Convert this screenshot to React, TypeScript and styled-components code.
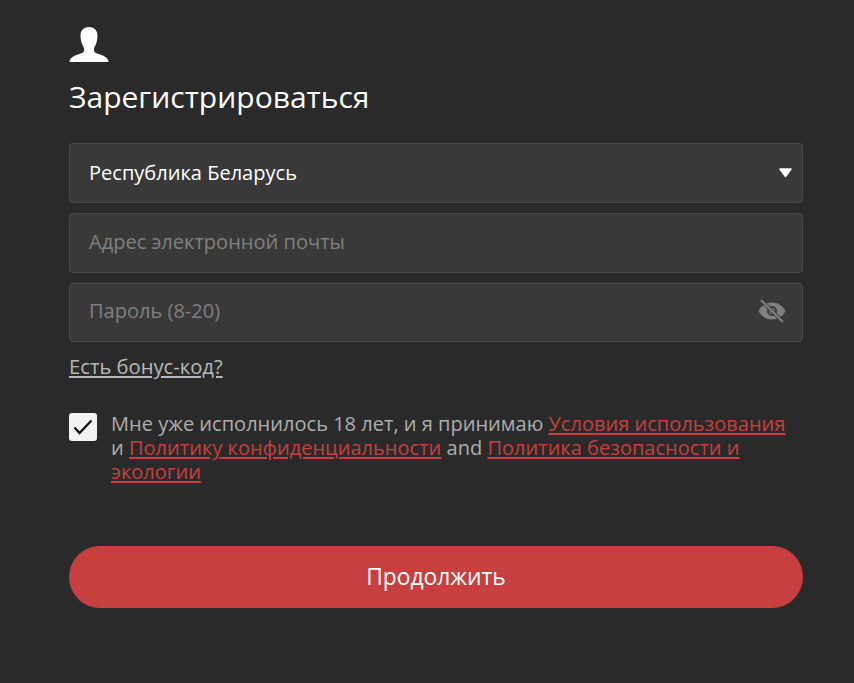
import React from "react"
import styled, { createGlobalStyle } from "styled-components"

const GlobalStyle = createGlobalStyle`
  html, body {
    margin: 0;
    padding: 0;
    background: #2a2a2a;
    font-family: "Open Sans", "Noto Sans", sans-serif;
  }
  * {
    box-sizing: border-box;
  }
`

const Page = styled.div`
  width: 854px;
  height: 683px;
  padding: 25px 51px 0 69px;
  background: #2a2a2a;
  overflow: hidden;
`

const UserIcon = styled.svg`
  display: block;
  width: 40px;
  height: 38px;
`

const Title = styled.h1`
  margin: 14px 0 26px;
  font-size: 30px;
  line-height: 40px;
  font-weight: 400;
  color: #fff;
`

const Fields = styled.div`
  display: flex;
  flex-direction: column;
  gap: 10px;
`

const Field = styled.div<{ $short?: boolean }>`
  display: flex;
  align-items: center;
  justify-content: space-between;
  height: ${(p) => (p.$short ? 59.5 : 60)}px;
  padding: 0 17px 0 19px;
  background: #393939;
  border: 1px solid #4a4a4a;
  border-radius: 4px;
`

const FieldText = styled.span<{ $filled?: boolean }>`
  margin-top: ${(p) => (p.$filled ? -2 : -3)}px;
  font-size: 20.05px;
  font-weight: ${(p) => (p.$filled ? 500 : 400)};
  color: ${(p) => (p.$filled ? "#fff" : "#808080")};
`

const Caret = styled.svg`
  display: block;
  width: 13px;
  height: 10px;
  margin-right: -7px;
`

const EyeIcon = styled.svg`
  display: block;
  width: 28px;
  height: 24px;
  margin-top: -2px;
  margin-right: -1px;
`

const BonusLink = styled.a`
  display: inline-block;
  margin-top: 10px;
  font-size: 20.2px;
  line-height: 28px;
  color: #b9b9b9;
  text-decoration: underline;
`

const Agreement = styled.div`
  display: flex;
  gap: 14px;
  margin-top: 32px;
  padding-right: 14px;
`

const CheckBox = styled.div`
  flex: none;
  display: flex;
  align-items: center;
  justify-content: center;
  width: 28px;
  height: 28px;
  margin-top: 1px;
  background: #f2f2f2;
  border-radius: 3px;
`

const AgreementText = styled.p`
  margin: 0;
  font-size: 20.05px;
  line-height: 24px;
  color: #adadad;
`

const RedLink = styled.a`
  color: #c73f3f;
  text-decoration: underline;
`

const SubmitButton = styled.button`
  display: block;
  width: 100%;
  height: 62px;
  margin-top: 62px;
  padding: 0 0 2px;
  border: 0;
  border-radius: 31px;
  background: #c73f3f;
  color: #fff;
  font-family: inherit;
  font-size: 22.8px;
  font-weight: 400;
`

export default function App() {
  return (
    <Page>
      <GlobalStyle />
      <UserIcon viewBox="0 0 40 38">
        <path
          fill="#fff"
          d="M20 2c-5.500 0-8.500 3.500-8.500 9 0 4.500 1.500 9 3.500 12v2.500c0 2-3 3-6 4-4 1.300-7.500 3-8.500 6.500-.2.800.3 1 1 1h37c.7 0 1.200-.2 1-1-1-3.500-4.500-5.200-8.500-6.500-3-1-6-2-6-4V23c2-3 3.500-7.500 3.500-12 0-5.500-3-9-8.500-9z"
        />
      </UserIcon>
      <Title>Зарегистрироваться</Title>
      <Fields>
        <Field>
          <FieldText $filled>Республика Беларусь</FieldText>
          <Caret viewBox="0 0 13 10">
            <path fill="#fff" stroke="#fff" strokeLinejoin="round" strokeWidth="1.500" d="M1 1h11L6.500 8.500z" />
          </Caret>
        </Field>
        <Field $short>
          <FieldText>Адрес электронной почты</FieldText>
        </Field>
        <Field $short>
          <FieldText>Пароль (8-20)</FieldText>
          <EyeIcon viewBox="0 0 28 24">
            <path
              fill="#808080"
              d="M14 3.500C8 3.500 3 7 0.500 12 3 17 8 20.500 14 20.500S25 17 27.500 12C25 7 20 3.500 14 3.500z"
            />
            <circle cx="14" cy="12" r="4" fill="none" stroke="#393939" strokeWidth="2" />
            <path stroke="#393939" strokeWidth="3.500" d="M3 1l22 22" />
            <path stroke="#808080" strokeWidth="2" d="M3 1l22 22" />
          </EyeIcon>
        </Field>
      </Fields>
      <BonusLink>Есть бонус-код?</BonusLink>
      <Agreement>
        <CheckBox>
          <svg width="20" height="16" viewBox="0 0 20 16">
            <path d="M1.500 8.500l5 5.500L18.500 1.500" fill="none" stroke="#111" strokeWidth="2.300" />
          </svg>
        </CheckBox>
        <AgreementText>
          Мне уже исполнилось 18 лет, и я принимаю <RedLink>Условия использования</RedLink> и{" "}
          <RedLink>Политику конфиденциальности</RedLink> and <RedLink>Политика безопасности и экологии</RedLink>
        </AgreementText>
      </Agreement>
      <SubmitButton>Продолжить</SubmitButton>
    </Page>
  )
}
